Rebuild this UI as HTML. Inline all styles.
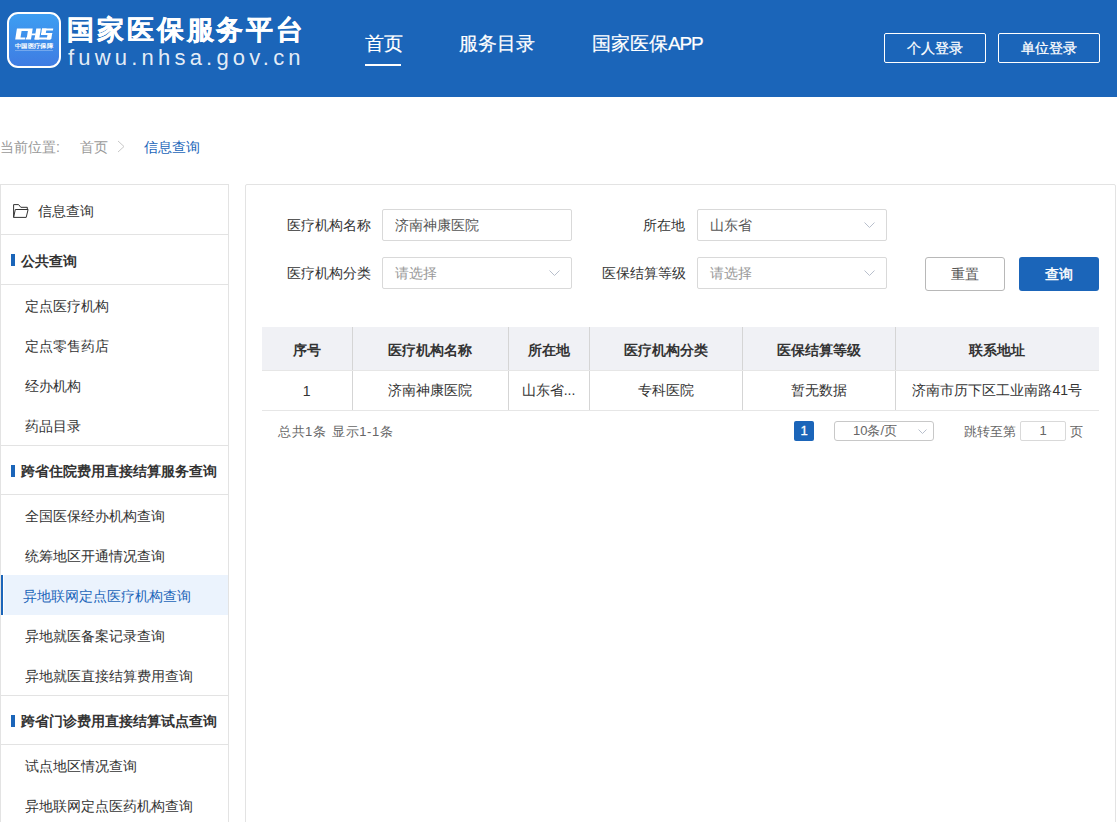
<!DOCTYPE html>
<html><head><meta charset="utf-8">
<style>
*{margin:0;padding:0;box-sizing:border-box;}
html,body{width:1117px;height:822px;overflow:hidden;background:#fff;font-family:"Liberation Sans",sans-serif;color:#333;}
.abs{position:absolute;}
#hdr{position:absolute;left:0;top:0;width:1117px;height:97px;background:#1b65b9;}
#logo{position:absolute;left:7px;top:12px;width:54px;height:56px;border:2px solid #fff;border-radius:11px;background:linear-gradient(180deg,#3d9ef2 0%,#3f7ce2 100%);overflow:hidden;}
.t{position:absolute;white-space:nowrap;line-height:1;}
.nav{color:#fff;font-size:19px;-webkit-text-stroke:0.2px #fff;}
.lbtn{position:absolute;top:33px;width:102px;height:30px;border:1px solid #fff;border-radius:2px;color:#fff;font-size:14px;-webkit-text-stroke:0.25px #fff;text-align:center;line-height:28px;}
.crumb{font-size:14px;color:#999;}
#side{position:absolute;left:0;top:184px;width:229px;height:700px;border:1px solid #e3e3e3;}
.hl{position:absolute;left:0;width:229px;height:1px;background:#e3e3e3;}
.si{position:absolute;font-size:14px;color:#333;white-space:nowrap;line-height:1;}
.st{position:absolute;font-size:14px;color:#333;font-weight:bold;white-space:nowrap;line-height:1;}
.bar{position:absolute;left:11px;width:4px;height:12px;background:#1b65b9;}
#main{position:absolute;left:245px;top:184px;width:871px;height:700px;border:1px solid #e3e3e3;border-radius:2px;}
.lab{position:absolute;font-size:14px;color:#333;white-space:nowrap;line-height:1;text-align:right;}
.inp{position:absolute;width:190px;height:32px;border:1px solid #d9d9d9;border-radius:2px;font-size:14px;line-height:30px;padding-left:12px;color:#555;}
.ph{color:#999;}
.chev{position:absolute;right:11px;top:12px;width:11px;height:6px;}
.btn{position:absolute;top:257px;width:80px;height:34px;border-radius:3px;font-size:14px;text-align:center;line-height:32px;}
table{position:absolute;left:262px;top:327px;border-collapse:collapse;font-size:14px;}
th{background:#f0f1f5;height:43px;font-weight:bold;color:#333;border-left:1px solid #d5d5d5;border-bottom:1px solid #e6e6e6;padding:0;text-align:center;}
td{height:40px;color:#333;border-left:1px solid #d5d5d5;border-bottom:1px solid #e6e6e6;padding:0;text-align:center;}
th:first-child,td:first-child{border-left:none;}
</style></head><body>
<div id="hdr">
  <div id="logo"></div>
  <svg class="abs" style="left:0;top:0" width="70" height="80" viewBox="0 0 70 80">
    <g fill="#fff" transform="translate(6.22,0) skewX(-8.93)">
      <path fill-rule="evenodd" d="M15.2 28.6 H31 V39.6 H25.6 V37.4 H24.9 V39.6 H15.2 Z M20.2 30.9 V37.4 H26.5 V30.9 Z"/>
      <rect x="30.5" y="33.4" width="4.5" height="1.9"/>
      <rect x="34.5" y="28.4" width="4.6" height="11.2"/>
      <rect x="34.5" y="37.4" width="15.8" height="2.2"/>
      <path d="M46.7 33 H51.2 V38.2 Q51.2 39.6 49.8 39.6 H46.7 Z"/>
      <rect x="40.3" y="32.9" width="10.9" height="2.2"/>
      <rect x="40.3" y="28.4" width="4.5" height="6.7"/>
      <rect x="40.3" y="28.4" width="11.2" height="2.2"/>
    </g>
    <text x="34" y="47.9" text-anchor="middle" font-size="6.4" font-weight="bold" fill="#fff" font-family="Liberation Sans, sans-serif" textLength="38" lengthAdjust="spacingAndGlyphs">中国医疗保障</text>
    <rect x="15" y="50" width="38" height="0.8" fill="#fff" opacity="0.35"/>
  </svg>
  <div class="t" style="left:67px;top:17px;font-size:27px;font-weight:bold;color:#fff;letter-spacing:2.9px;-webkit-text-stroke:0.3px #fff;">国家医保服务平台</div>
  <div class="t" style="left:68px;top:47px;font-size:22px;color:rgba(255,255,255,0.9);letter-spacing:4.2px;">fuwu.nhsa.gov.cn</div>
  <div class="t nav" style="left:365px;top:34px;">首页</div>
  <div class="abs" style="left:365px;top:64px;width:36px;height:2px;background:#fff;"></div>
  <div class="t nav" style="left:459px;top:34px;">服务目录</div>
  <div class="t nav" style="left:592px;top:34px;">国家医保<span style="letter-spacing:-1.2px">APP</span></div>
  <div class="lbtn" style="left:884px;">个人登录</div>
  <div class="lbtn" style="left:998px;">单位登录</div>
</div>

<div class="t crumb" style="left:0;top:140px;">当前位置:</div>
<div class="t crumb" style="left:80px;top:140px;">首页</div>
<svg class="abs" style="left:117px;top:140px" width="8" height="13" viewBox="0 0 8 13"><path d="M1 1 L7 6.5 L1 12" fill="none" stroke="#c8c8c8" stroke-width="1"/></svg>
<div class="t crumb" style="left:144px;top:140px;color:#1b65b9;">信息查询</div>

<div id="side"></div>
<div class="hl" style="top:234px"></div>
<div class="hl" style="top:284px"></div>
<div class="hl" style="top:445px"></div>
<div class="hl" style="top:494px"></div>
<div class="hl" style="top:695px"></div>
<div class="hl" style="top:744px"></div>
<svg class="abs" style="left:8px;top:196px" width="40" height="30" viewBox="0 0 40 30"><path d="M5.6 21.4 V8.6 H10.6 L12.8 11.3 H19.3 V13.5 M5.6 21.4 L7.3 13.5 H20.1 L18.2 21.4 Z" fill="none" stroke="#333" stroke-width="1" stroke-linejoin="round"/></svg>
<div class="si" style="left:38px;top:204px;">信息查询</div>
<div class="bar" style="top:254px"></div>
<div class="st" style="left:21px;top:254px;">公共查询</div>
<div class="si" style="left:25px;top:299px;">定点医疗机构</div>
<div class="si" style="left:25px;top:339px;">定点零售药店</div>
<div class="si" style="left:25px;top:379px;">经办机构</div>
<div class="si" style="left:25px;top:419px;">药品目录</div>
<div class="bar" style="top:465px"></div>
<div class="st" style="left:21px;top:464px;">跨省住院费用直接结算服务查询</div>
<div class="si" style="left:25px;top:509px;">全国医保经办机构查询</div>
<div class="si" style="left:25px;top:549px;">统筹地区开通情况查询</div>
<div class="abs" style="left:4px;top:575px;width:224px;height:40px;background:#ebf3fd;"></div>
<div class="abs" style="left:1px;top:575px;width:2px;height:40px;background:#1b65b9;"></div>
<div class="si" style="left:23px;top:589px;color:#1b65b9;">异地联网定点医疗机构查询</div>
<div class="si" style="left:25px;top:629px;">异地就医备案记录查询</div>
<div class="si" style="left:25px;top:669px;">异地就医直接结算费用查询</div>
<div class="bar" style="top:715px"></div>
<div class="st" style="left:21px;top:714px;">跨省门诊费用直接结算试点查询</div>
<div class="si" style="left:25px;top:759px;">试点地区情况查询</div>
<div class="si" style="left:25px;top:799px;">异地联网定点医药机构查询</div>

<div id="main"></div>
<div class="lab" style="left:287px;top:218px;">医疗机构名称</div>
<div class="inp" style="left:382px;top:209px;">济南神康医院</div>
<div class="lab" style="left:643px;top:218px;">所在地</div>
<div class="inp" style="left:697px;top:209px;">山东省<svg class="chev" viewBox="0 0 11 6"><path d="M0.5 0.5 L5.5 5.5 L10.5 0.5" fill="none" stroke="#b8bfcc" stroke-width="1"/></svg></div>
<div class="lab" style="left:287px;top:266px;">医疗机构分类</div>
<div class="inp ph" style="left:382px;top:257px;">请选择<svg class="chev" viewBox="0 0 11 6"><path d="M0.5 0.5 L5.5 5.5 L10.5 0.5" fill="none" stroke="#b8bfcc" stroke-width="1"/></svg></div>
<div class="lab" style="left:602px;top:266px;">医保结算等级</div>
<div class="inp ph" style="left:697px;top:257px;">请选择<svg class="chev" viewBox="0 0 11 6"><path d="M0.5 0.5 L5.5 5.5 L10.5 0.5" fill="none" stroke="#b8bfcc" stroke-width="1"/></svg></div>
<div class="btn" style="left:925px;border:1px solid #b8b8b8;color:#555;">重置</div>
<div class="btn" style="left:1019px;background:#1b65b9;color:#fff;font-weight:400;-webkit-text-stroke:0.45px #fff;line-height:34px;">查询</div>

<table>
<tr><th style="width:90px"><span style="position:relative;top:3px">序号</span></th><th style="width:156px"><span style="position:relative;top:3px">医疗机构名称</span></th><th style="width:81px"><span style="position:relative;top:3px">所在地</span></th><th style="width:153px"><span style="position:relative;top:3px">医疗机构分类</span></th><th style="width:153px"><span style="position:relative;top:3px">医保结算等级</span></th><th style="width:204px"><span style="position:relative;top:3px">联系地址</span></th></tr>
<tr><td><span style="position:relative;top:1px">1</span></td><td><span style="position:relative;top:1px">济南神康医院</span></td><td><span style="position:relative;top:1px">山东省...</span></td><td><span style="position:relative;top:1px">专科医院</span></td><td><span style="position:relative;top:1px">暂无数据</span></td><td><span style="position:relative;top:1px">济南市历下区工业南路41号</span></td></tr>
</table>

<div class="t" style="left:278px;top:425px;font-size:13px;color:#666;letter-spacing:0.5px;">总共1条</div><div class="t" style="left:332px;top:425px;font-size:13px;color:#666;letter-spacing:0.6px;">显示1-1条</div>
<div class="abs" style="left:794px;top:421px;width:20px;height:20px;background:#1b65b9;border-radius:2px;color:#fff;font-size:13px;-webkit-text-stroke:0.3px #fff;text-align:center;line-height:20px;">1</div>
<div class="abs" style="left:834px;top:421px;width:100px;height:20px;border:1px solid #c8c8c8;border-radius:3px;font-size:13px;color:#666;line-height:18px;padding-left:18px;">10条/页<svg class="abs" style="left:83px;top:7px" width="9" height="5" viewBox="0 0 9 5"><path d="M0.5 0.5 L4.5 4.5 L8.5 0.5" fill="none" stroke="#b8bfcc" stroke-width="1"/></svg></div>
<div class="t" style="left:964px;top:425px;font-size:13px;color:#666;">跳转至第</div>
<div class="abs" style="left:1020px;top:421px;width:46px;height:20px;border:1px solid #d9d9d9;border-radius:2px;font-size:13px;color:#666;text-align:center;line-height:18px;">1</div>
<div class="t" style="left:1070px;top:425px;font-size:13px;color:#666;">页</div>
</body></html>
